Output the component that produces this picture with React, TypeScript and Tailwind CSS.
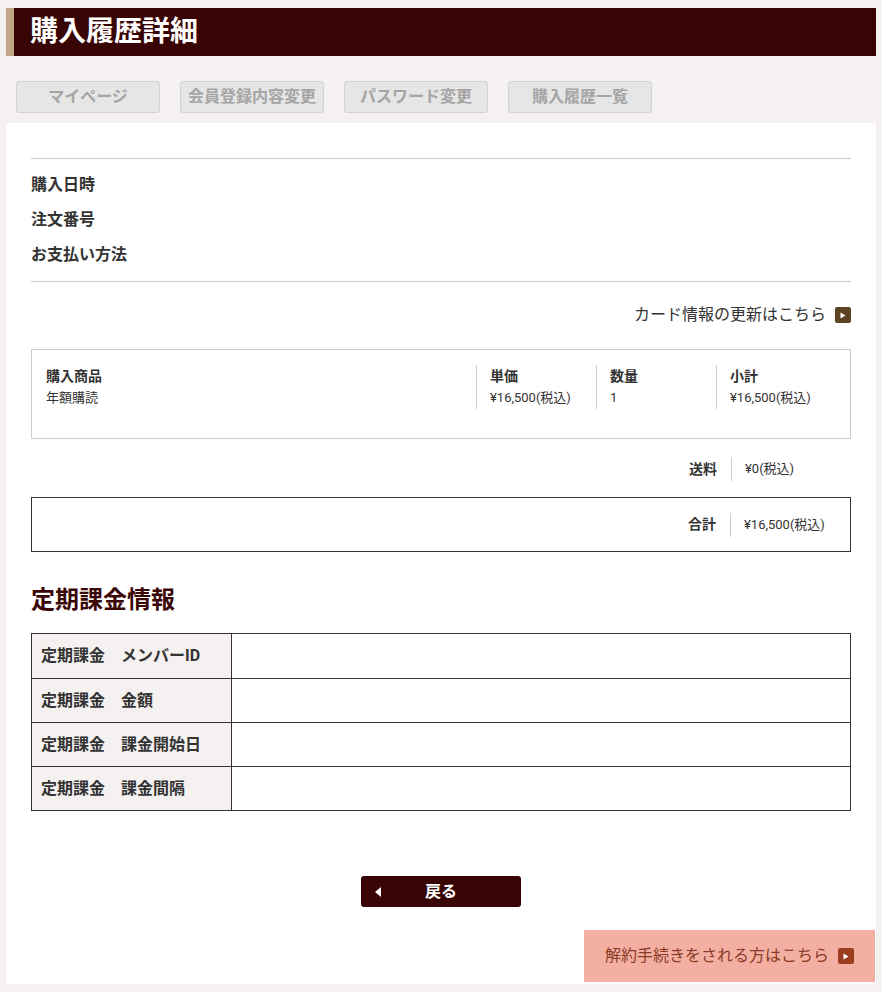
import type { ReactNode } from "react";

const navItems = ["マイページ", "会員登録内容変更", "パスワード変更", "購入履歴一覧"];

const infoLabels = ["購入日時", "注文番号", "お支払い方法"];

const recurringRows = [
  "定期課金　メンバーID",
  "定期課金　金額",
  "定期課金　課金開始日",
  "定期課金　課金間隔",
];

function ArrowBox({ className }: { className: string }) {
  return (
    <span className={`inline-flex size-4 shrink-0 items-center justify-center rounded-[2px] ${className}`}>
      <svg aria-hidden="true" width="6" height="7" viewBox="0 0 6 7">
        <path d="M0.5 0.5 L5.5 3.5 L0.5 6.5 Z" fill="#fff" />
      </svg>
    </span>
  );
}

function ItemCol({ head, value, first }: { head: string; value: string; first?: boolean }) {
  return (
    <div className={first ? "flex-1" : "w-[120px] border-l border-[#ccc] pl-[13px]"}>
      <div className="h-[22px] text-[14px] font-bold leading-[22px]">{head}</div>
      <div className="h-[22px] text-[13px] leading-[22px]">{value}</div>
    </div>
  );
}

function SumRow({ label, value }: { label: string; value: ReactNode }) {
  return (
    <div className="flex h-[24px] items-stretch justify-end">
      <div className="flex items-center pr-[14px] text-[14px] font-bold">{label}</div>
      <div className="flex w-[120px] items-center border-l border-[#ccc] pl-[13px] text-[13px]">{value}</div>
    </div>
  );
}

export default function App() {
  return (
    <div className="min-h-screen bg-[#f4f1f0] px-[6px] pb-2 pt-2 font-['Roboto','Noto_Sans_CJK_JP',sans-serif] text-[#333]">
      <header className="flex h-[48px] w-[870px]">
        <div className="w-[8px] bg-[#c2a684]" />
        <div className="flex flex-1 items-center bg-[#380404] pl-[16px]">
          <h1 className="text-[28px] font-bold leading-none text-white">購入履歴詳細</h1>
        </div>
      </header>

      <nav className="mt-[25px] flex gap-5 pl-[10px]">
        {navItems.map((label) => (
          <span
            className="flex h-[32px] w-[144px] items-center justify-center rounded-[3px] border border-[#d2d2d2] bg-[#e6e6e6] text-[16px] font-bold text-[#a5a5a5]"
            key={label}
          >
            {label}
          </span>
        ))}
      </nav>

      <main className="mt-[10px] w-[870px] bg-white px-[25px] pb-[2px] pt-[35px]">
        <hr className="border-t border-[#ccc]" />
        <dl className="mb-[9px] mt-2">
          {infoLabels.map((label) => (
            <div className="flex h-[35px] items-center text-[16px] font-bold" key={label}>
              <dt>{label}</dt>
            </div>
          ))}
        </dl>
        <hr className="border-t border-[#ccc]" />

        <div className="mt-[22px] flex h-[22px] items-center justify-end gap-[9px] text-[16px]">
          <span>カード情報の更新はこちら</span>
          <ArrowBox className="bg-[#5e4226]" />
        </div>

        <div className="mt-[23px] flex h-[90px] border border-[#ccc] px-[14px] pt-[15px]">
          <ItemCol first head="購入商品" value="年額購読" />
          <div className="flex h-[44px]">
            <ItemCol head="単価" value="¥16,500(税込)" />
            <ItemCol head="数量" value="1" />
            <ItemCol head="小計" value="¥16,500(税込)" />
          </div>
        </div>

        <div className="mt-[18px]">
          <SumRow label="送料" value="¥0(税込)" />
        </div>

        <div className="mt-[16px] flex h-[55px] items-center justify-end border border-[#333]">
          <SumRow label="合計" value="¥16,500(税込)" />
        </div>

        <h2 className="mt-[32px] text-[24px] font-bold leading-[32px] text-[#3a0606]">定期課金情報</h2>

        <div className="mt-[17px] border border-[#333]">
          {recurringRows.map((label, i) => (
            <div className={`flex h-[44px] ${i > 0 ? "border-t border-[#333]" : ""}`} key={label}>
              <div className="flex w-[200px] items-center border-r border-[#333] bg-[#f4f1f0] pl-[9px] text-[16px] font-bold">
                {label}
              </div>
              <div className="flex-1" />
            </div>
          ))}
        </div>

        <div className="mt-[65px] flex justify-center">
          <button
            className="flex h-[31px] w-[160px] items-center rounded-[3px] bg-[#380404] pl-[14px] pr-[20px] text-[16px] font-bold text-white"
            type="button"
          >
            <svg aria-hidden="true" width="6" height="10" viewBox="0 0 6 10">
              <path d="M6 0 L0 5 L6 10 Z" fill="#fff" />
            </svg>
            <span className="flex-1 text-center">戻る</span>
          </button>
        </div>

        <div className="-mr-[24px] mt-[23px] flex justify-end">
          <a className="flex h-[52px] w-[291px] items-center justify-center gap-[9px] bg-[#f3b0a2] text-[16px] text-[#8a3a26]" href="#">
            <span>解約手続きをされる方はこちら</span>
            <ArrowBox className="bg-[#9c3f20]" />
          </a>
        </div>
      </main>
    </div>
  );
}
